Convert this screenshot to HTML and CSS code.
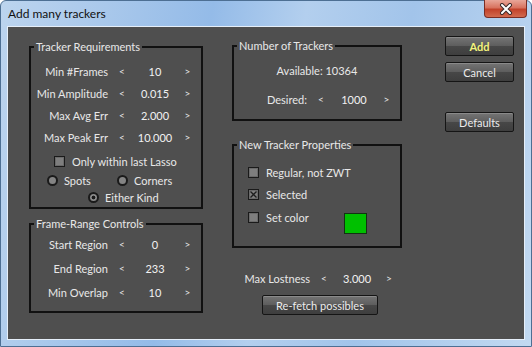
FILE: index.html
```html
<!DOCTYPE html>
<html lang="en">
<head>
  <meta charset="UTF-8" />
  <title>Add many trackers</title>
  <link rel="stylesheet" href="styles.css">
</head>
<body>

  <div class="window">
    <!-- Title bar -->
    <div class="titlebar">
      <span class="title">Add many trackers</span>
      <span class="close">
        <svg width="16" height="12" viewBox="0 0 16 12">
          <path d="M4 2 L12 10 M12 2 L4 10" stroke="#3a2a2a" stroke-width="4" stroke-linecap="round" />
          <path d="M4 2 L12 10 M12 2 L4 10" stroke="#ffffff" stroke-width="2" stroke-linecap="round" />
        </svg>
      </span>
    </div>

    <div class="client">

      <!-- Left column -->
      <div class="col col-left">
        <fieldset class="group group-req">
          <legend>Tracker Requirements</legend>
          <div class="spin-row">
            <span class="spin-label">Min #Frames</span>
            <span class="spin-arrow">&lt;</span>
            <span class="spin-value">10</span>
            <span class="spin-arrow">&gt;</span>
          </div>
          <div class="spin-row">
            <span class="spin-label">Min Amplitude</span>
            <span class="spin-arrow">&lt;</span>
            <span class="spin-value">0.015</span>
            <span class="spin-arrow">&gt;</span>
          </div>
          <div class="spin-row">
            <span class="spin-label">Max Avg Err</span>
            <span class="spin-arrow">&lt;</span>
            <span class="spin-value">2.000</span>
            <span class="spin-arrow">&gt;</span>
          </div>
          <div class="spin-row">
            <span class="spin-label">Max Peak Err</span>
            <span class="spin-arrow">&lt;</span>
            <span class="spin-value">10.000</span>
            <span class="spin-arrow">&gt;</span>
          </div>
          <div class="check-row lasso-row">
            <span class="check"></span>
            <span class="check-text">Only within last Lasso</span>
          </div>
          <div class="radio-row">
            <span class="radio-item spots"><span class="radio"></span>Spots</span>
            <span class="radio-item"><span class="radio"></span>Corners</span>
          </div>
          <div class="radio-row either-row">
            <span class="radio-item"><span class="radio on"></span>Either Kind</span>
          </div>
        </fieldset>

        <fieldset class="group group-range">
          <legend>Frame-Range Controls</legend>
          <div class="spin-row">
            <span class="spin-label">Start Region</span>
            <span class="spin-arrow">&lt;</span>
            <span class="spin-value">0</span>
            <span class="spin-arrow">&gt;</span>
          </div>
          <div class="spin-row">
            <span class="spin-label">End Region</span>
            <span class="spin-arrow">&lt;</span>
            <span class="spin-value">233</span>
            <span class="spin-arrow">&gt;</span>
          </div>
          <div class="spin-row">
            <span class="spin-label">Min Overlap</span>
            <span class="spin-arrow">&lt;</span>
            <span class="spin-value">10</span>
            <span class="spin-arrow">&gt;</span>
          </div>
        </fieldset>
      </div>

      <!-- Middle column -->
      <div class="col col-mid">
        <fieldset class="group group-count">
          <legend>Number of Trackers</legend>
          <div class="available">Available: 10364</div>
          <div class="spin-row spin-desired">
            <span class="spin-label">Desired:</span>
            <span class="spin-arrow">&lt;</span>
            <span class="spin-value">1000</span>
            <span class="spin-arrow">&gt;</span>
          </div>
        </fieldset>

        <fieldset class="group group-props">
          <legend>New Tracker Properties</legend>
          <div class="check-row">
            <span class="check"></span>
            <span class="check-text">Regular, not ZWT</span>
          </div>
          <div class="check-row">
            <span class="check">
              <svg width="9" height="9" viewBox="0 0 9 9">
                <path d="M1.5 1.5 L7.5 7.5 M7.5 1.5 L1.5 7.5" stroke="#1e1e1e" stroke-width="1.3" />
              </svg>
            </span>
            <span class="check-text">Selected</span>
          </div>
          <div class="color-row">
            <div class="check-row">
              <span class="check"></span>
              <span class="check-text">Set color</span>
            </div>
            <span class="swatch"></span>
          </div>
        </fieldset>

        <div class="spin-row spin-lost">
          <span class="spin-label">Max Lostness</span>
          <span class="spin-arrow">&lt;</span>
          <span class="spin-value">3.000</span>
          <span class="spin-arrow">&gt;</span>
        </div>

        <button class="btn btn-refetch">Re-fetch possibles</button>
      </div>

      <!-- Right column -->
      <div class="col col-right">
        <button class="btn btn-add">Add</button>
        <button class="btn">Cancel</button>
        <button class="btn btn-defaults">Defaults</button>
      </div>

    </div>
  </div>

</body>
</html>
```

FILE: styles.css
```css
* {
  margin: 0;
  padding: 0;
  box-sizing: border-box;
}

body {
  background: #ffffff;
  font-family: Lato, "Noto Sans", sans-serif;
  font-size: 11px;
}

/* Window frame */
.window {
  width: 532px;
  height: 347px;
  display: flex;
  flex-direction: column;
  border: 1px solid #4d6f93;
  border-radius: 6px 6px 0 0;
  background: linear-gradient(100deg, #bcd4ee 0%, #a9c8eb 18%, #94bbe8 36%, #b3cfee 52%, #a2c4ea 70%, #c2d9f1 100%);
}

.titlebar {
  height: 25px;
  display: flex;
  align-items: flex-start;
  padding-left: 7px;
}

.title {
  margin-top: 5px;
  font-size: 12px;
  line-height: 15px;
  color: #111111;
}

.close {
  margin-left: auto;
  margin-right: 4px;
  margin-top: -1px;
  width: 43px;
  height: 18px;
  display: flex;
  align-items: center;
  justify-content: center;
  border: 1px solid #7a2d24;
  border-top: none;
  border-radius: 0 0 4px 4px;
  background: linear-gradient(#e8a698 0%, #d8735f 45%, #c2422a 55%, #d26a4e 100%);
}

/* Client area */
.client {
  flex: 1;
  margin: 0 6px 6px 6px;
  border: 1px solid #e6eff9;
  background: #4f4f4f;
  display: flex;
  align-items: flex-start;
  padding: 9px 0 0 21px;
  color: #e8e8e8;
}

.col {
  display: flex;
  flex-direction: column;
}

.col-left {
  width: 174px;
  margin-top: 4px;
}

.col-mid {
  width: 170px;
  margin-left: 29px;
  margin-top: 3px;
}

.col-right {
  width: 69px;
  margin-left: 43px;
}

/* Group boxes */
.group {
  border: 2px solid #111111;
  min-width: 0;
  padding: 0;
}

.group legend {
  margin-left: 3px;
  padding: 0 2px;
  font-size: 11px;
  line-height: 14px;
  color: #e8e8e8;
}

.group-req {
  padding: 6px 0 2px 0;
}

.group-range {
  margin-top: 8px;
  padding: 1px 0 7px 0;
}

.group-count {
  padding: 7px 0 9px 0;
}

.group-props {
  margin-top: 17px;
  padding: 9px 0 12px 0;
}

/* Spinner rows */
.spin-row {
  display: grid;
  grid-template-columns: 77px 28px 38px 27px;
  align-items: center;
  height: 22px;
  white-space: nowrap;
}

.group-range .spin-row {
  height: 24px;
}

.spin-label {
  text-align: right;
}

.spin-arrow {
  text-align: center;
  font-size: 10px;
}

.spin-value {
  text-align: center;
  color: #f2f2f2;
}

.available {
  height: 22px;
  line-height: 22px;
  text-align: center;
}

.spin-desired {
  margin-top: 6px;
  grid-template-columns: 73px 28px 38px 27px;
}

.spin-lost {
  margin-top: 19px;
  grid-template-columns: 78px 28px 38px 26px;
}

/* Checkboxes */
.check-row {
  display: flex;
  align-items: center;
  height: 22px;
  padding-left: 14px;
}

.group-props .check-row:nth-child(3) {
  height: 23px;
}

.check {
  width: 11px;
  height: 11px;
  flex-shrink: 0;
  display: flex;
  align-items: center;
  justify-content: center;
  border: 1px solid #1a1a1a;
  background: #7e7e7e;
  box-shadow: inset 0 0 0 1px #6a6a6a;
}

.check-text {
  margin-left: 7px;
  white-space: nowrap;
}

.lasso-row {
  margin-top: 2px;
  padding-left: 23px;
}

.color-row {
  display: flex;
  align-items: flex-start;
}

.swatch {
  margin-left: auto;
  margin-right: 33px;
  margin-top: 7px;
  width: 23px;
  height: 21px;
  border: 1px solid #123312;
  background: #00c000;
}

/* Radio buttons */
.radio-row {
  display: flex;
  align-items: center;
  height: 16px;
  padding-left: 16px;
}

.either-row {
  margin-top: 1px;
  padding-left: 57px;
}

.radio-item {
  display: flex;
  align-items: center;
  white-space: nowrap;
}

.radio-item.spots {
  width: 70px;
}

.radio {
  width: 11px;
  height: 11px;
  margin-right: 6px;
  border-radius: 50%;
  border: 2px solid #1a1a1a;
  background: #848484;
}

.radio.on {
  background: radial-gradient(circle, #1a1a1a 0 1.6px, #8a8a8a 2.2px);
}

/* Buttons */
.btn {
  width: 69px;
  height: 20px;
  border: 1px solid #151515;
  border-radius: 2px;
  background: linear-gradient(#747474 0%, #5e5e5e 48%, #474747 52%, #3e3e3e 100%);
  box-shadow: inset 0 1px 0 #8a8a8a;
  font-family: Lato, "Noto Sans", sans-serif;
  font-size: 11px;
  line-height: 17px;
  color: #ececec;
  text-align: center;
}

.btn + .btn {
  margin-top: 6px;
}

.btn-add {
  color: #f3f37c;
  font-weight: bold;
}

.col-right .btn-defaults {
  margin-top: 30px;
}

.btn-refetch {
  width: 116px;
  margin-top: 6px;
  margin-left: 30px;
}
```
